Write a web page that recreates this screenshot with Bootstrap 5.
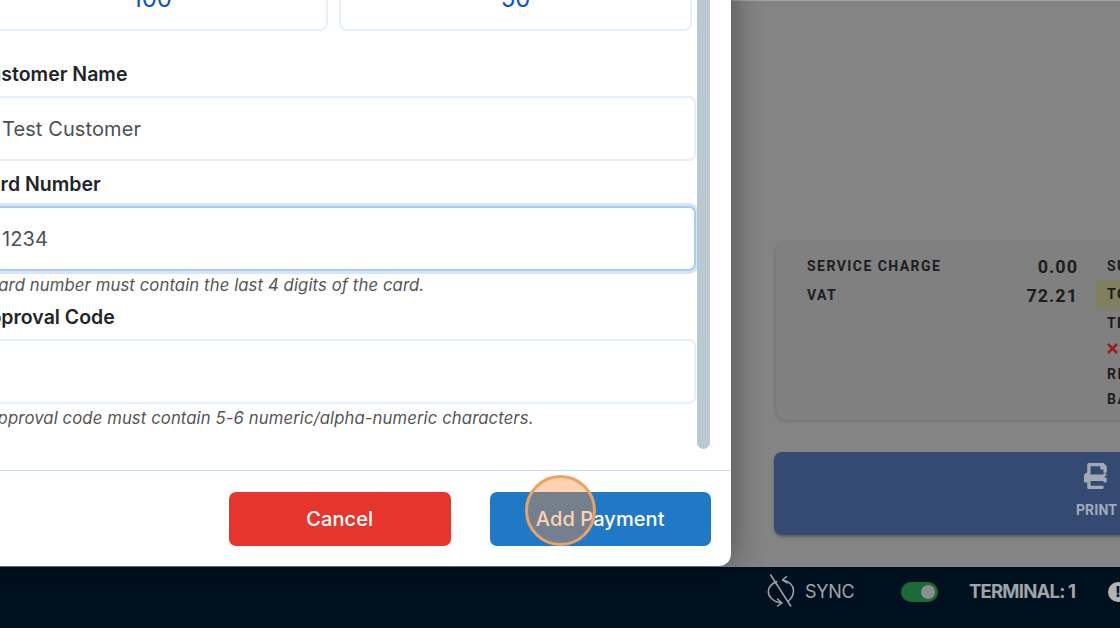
<!DOCTYPE html>
<html lang="en">
<head>
  <meta charset="UTF-8" />
  <title>Add Payment</title>
  <link href="https://cdn.jsdelivr.net/npm/bootstrap@5.3.0/dist/css/bootstrap.min.css" rel="stylesheet" />
  <style>
    body { margin: 0; width: 1120px; height: 628px; overflow: hidden; font-family: Inter, "Liberation Sans", sans-serif; background: #848484; }
    .pos-page { position: relative; height: 628px; overflow: hidden; }
    .pos-main { height: 567px; padding: 241px 0 0 774px; background: #848484; border-top: 1px solid #a4a4a4; box-sizing: border-box; }
    .pos-summary { width: 560px; height: 178px; margin-left: 2px; padding: 10px 0 0 31px; background: #808080; border-radius: 10px; box-shadow: 0 1px 4px rgba(0,0,0,.18); font-family: Roboto, sans-serif; font-weight: 700; font-size: 14px; letter-spacing: 1.45px; color: #1d1d1d; }
    .pos-sumleft { width: 272px; flex: none; }
    .pos-sumrow { height: 29px; align-items: center; }
    .pos-sumrow b { font-size: 18px; font-weight: 700; letter-spacing: 1px; margin-right: 1px; }
    .pos-sumright { margin-left: 28px; width: 200px; flex: none; }
    .pos-sumright div { height: 25px; line-height: 25px; }
    .pos-sumright .pos-r0 { height: 28px; line-height: 29px; }
    .pos-sumright .pos-total { height: 29px; line-height: 29px; margin: 0 0 3px -11px; padding-left: 11px; background: #80805f; }
    .pos-sumright .pos-r2 { line-height: 22px; }
    .pos-x { display: flex; align-items: center; }
    .pos-x svg { margin-top: -2px; }
    .pos-print { width: 560px; height: 83px; margin-top: 32px; background: #344a73; border-radius: 8px; box-shadow: 0 2px 3px rgba(0,0,0,.3); padding-left: 302px; color: #a3a9b5; }
    .pos-print svg { width: 26px; height: 26px; fill: #a3a9b5; margin-top: 11px; }
    .pos-print span { font-family: Roboto, sans-serif; font-weight: 700; font-size: 14px; letter-spacing: .1px; margin-top: 13px; line-height: 17px; }
    .pos-bar { height: 61px; background: #00101f; padding: 0 0 12px 767px; color: #a0a4a8; }
    .pos-bar svg { flex: none; }
    .pos-sync { font-size: 18px; margin-left: 9px; letter-spacing: -.3px; width: 96px; flex: none; }
    .pos-toggle { width: 37px; height: 20px; flex: none; background: #1b6b39; border-radius: 10px; padding: 3px 3px 3px 20px; margin-right: 31px; }
    .pos-toggle i { display: block; width: 14px; height: 14px; border-radius: 50%; background: #8e8e92; }
    .pos-terminal { font-size: 18.500px; font-weight: 700; letter-spacing: -.8px; width: 139px; flex: none; white-space: nowrap; }
    .pos-alert { width: 20px; height: 20px; flex: none; border-radius: 50%; background: #b3b3b3; color: #00101f; font-weight: 800; font-size: 15px; line-height: 20px; text-align: center; }

    .pay-modal { position: absolute; left: -60px; top: -300px; width: 791px; height: 866px; background: #fff; border: 0; border-radius: 0 0 12px 0; box-shadow: 0 0 34px rgba(0,0,0,.42); color: #212529; }
    .pay-body { height: 770px; padding: 300px 35px 0 0; }
    .pay-scroll { position: absolute; left: 757px; top: 0; width: 13px; height: 749px; background: #b9c9cf; border-radius: 0 0 7px 7px; }
    .pay-amounts { gap: 11px; height: 31px; padding-left: 36px; }
    .pay-amount { height: 62px; margin-top: -31px; border: 2px solid #e6f0fb; border-radius: 8px; font-size: 24px; color: #0d4fc4; line-height: 56px; text-align: center; }
    .pay-amt1 { width: 352px; }
    .pay-amt2 { width: 353px; }
    .pay-field { padding-left: 35px; }
    .pay-first { padding-top: 32px; }
    .pay-second { padding-top: 12px; }
    .pay-third { padding-top: 11px; }
    .pay-field label { display: block; font-size: 19.500px; font-weight: 600; line-height: 22px; margin: 0 0 11px; }
    .pay-field .form-control { height: 65px; width: 727px; margin-left: -6px; padding: 0 0 0 31px; border: 2px solid #e3effc; border-radius: 7px; font-size: 20px; color: #4a5056; box-shadow: none; letter-spacing: .1px; }
    .pay-field .form-control.pay-focus { border-color: #a9cdf0; box-shadow: 0 0 0 3px #d6e6f9; }
    .pay-hint { font-size: 16.700px; font-style: italic; color: #555; line-height: 20px; margin: 4px 0 0 11px; white-space: nowrap; letter-spacing: .1px; }
    .pay-foot { position: absolute; left: 0; right: 0; top: 770px; height: 96px; border-top: 1px solid #c8e0f5; padding: 21px 20px 0 289px; gap: 39px; }
    .pay-foot .btn { width: 222px; height: 54px; border: 0; border-radius: 7px; color: #fff; font-size: 20px; font-weight: 500; letter-spacing: .1px; padding: 0; }
    .pay-cancel { background: #e5352d; }
    .pay-add { background: #2079c7; }
    .pay-click { position: absolute; left: 525px; top: 475px; width: 71px; height: 71px; border-radius: 50%; border: 3px solid #eea25f; background: rgba(255,140,50,.38); }
  </style>
</head>
<body>
  <div class="pos-page">
    <div class="pos-main">
      <div class="pos-summary d-flex">
        <div class="pos-sumleft">
          <div class="pos-sumrow d-flex justify-content-between"><span>SERVICE CHARGE</span><b>0.00</b></div>
          <div class="pos-sumrow d-flex justify-content-between"><span>VAT</span><b>72.21</b></div>
        </div>
        <div class="pos-sumright">
          <div class="pos-r0">SUB TOTAL</div>
          <div class="pos-total">TOTAL</div>
          <div class="pos-r2">TENDERED</div>
          <div class="pos-x"><svg width="11" height="11" viewBox="0 0 11 11" stroke="#a01c1c" stroke-width="2.500"><path d="M1 1l9 9M10 1l-9 9"/></svg></div>
          <div>REFUND</div>
          <div>BALANCE</div>
        </div>
      </div>
      <div class="pos-print d-flex flex-column align-items-start">
        <svg viewBox="0 0 512 512" class="ms-2"><path d="M448 192V77.25c0-8.49-3.37-16.62-9.37-22.63L393.37 9.37c-6-6-14.14-9.37-22.63-9.37H96C78.33 0 64 14.33 64 32v160c-35.35 0-64 28.65-64 64v112c0 8.84 7.16 16 16 16h48v96c0 17.67 14.33 32 32 32h256c17.67 0 32-14.33 32-32v-96h48c8.84 0 16-7.16 16-16V256c0-35.35-28.65-64-64-64zm-64 256H128v-96h256v96zm0-224H128V64h192v48c0 8.84 7.16 16 16 16h48v96zm48 72c-13.25 0-24-10.75-24-24 0-13.26 10.75-24 24-24s24 10.74 24 24c0 13.25-10.75 24-24 24z"/></svg>
        <span>PRINT</span>
      </div>
    </div>
    <div class="pos-bar d-flex align-items-center">
      <svg width="29" height="35" viewBox="0 0 29 35" fill="none" stroke="#a0a4a8" stroke-width="1.500" stroke-linecap="round" stroke-linejoin="round">
        <path d="M3.700 1l20 31"/>
        <path d="M9.700 7.500C4 10 1.300 13.500 1.300 17.500c0 5 4 10 13 11.500"/>
        <path d="M10.500 25l4.500 4-4.500 3"/>
        <path d="M16 6c6 1 10.500 5.500 10.500 10.500 0 4-1.500 7.500-5 10.500"/>
        <path d="M19.500 2.500L15.500 6l4.500 3"/>
      </svg>
      <span class="pos-sync">SYNC</span>
      <span class="pos-toggle"><i></i></span>
      <span class="pos-terminal">TERMINAL: 1</span>
      <span class="pos-alert">!</span>
    </div>

    <div class="modal-content pay-modal">
      <div class="modal-body pay-body">
        <div class="d-flex pay-amounts">
          <div class="pay-amount pay-amt1">100</div>
          <div class="pay-amount pay-amt2">50</div>
        </div>
        <div class="pay-field pay-first">
          <label class="form-label">Customer Name</label>
          <input class="form-control" type="text" value="Test Customer" />
        </div>
        <div class="pay-field pay-second">
          <label class="form-label">Card Number</label>
          <input class="form-control pay-focus" type="text" value="1234" />
          <div class="form-text pay-hint">Card number must contain the last 4 digits of the card.</div>
        </div>
        <div class="pay-field pay-third">
          <label class="form-label">Approval Code</label>
          <input class="form-control" type="text" />
          <div class="form-text pay-hint">Approval code must contain 5-6 numeric/alpha-numeric characters.</div>
        </div>
        <div class="pay-scroll"></div>
      </div>
      <div class="modal-footer pay-foot justify-content-start align-items-start flex-nowrap">
        <button class="btn pay-cancel m-0" type="button">Cancel</button>
        <button class="btn pay-add m-0" type="button">Add Payment</button>
      </div>
    </div>
    <div class="pay-click"></div>
  </div>
  <script src="https://cdn.jsdelivr.net/npm/bootstrap@5.3.0/dist/js/bootstrap.bundle.min.js"></script>
</body>
</html>
